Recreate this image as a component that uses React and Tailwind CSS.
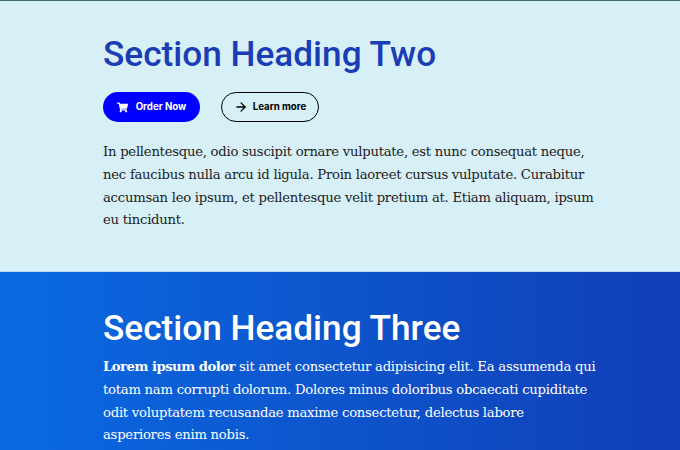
import { ArrowRight } from 'lucide-react';
import { FaShoppingCart } from 'react-icons/fa';

const bodyFont = "font-['DejaVu_Serif',serif] text-[13.2px] leading-[22.75px] tracking-[-0.25px]";

export default function App() {
  return (
    <div className="h-[450px] w-[680px] overflow-hidden">
      <section className="h-[272px] border-t border-b border-t-[#3d6b6e] border-b-[#b9dcf2] bg-[#d7eff6] pt-[32px] pl-[103px]">
        <h2 className="font-['Roboto',sans-serif] text-[35.2px] leading-[42px] font-medium text-[#1a3db5]">
          Section Heading Two
        </h2>
        <div className="mt-[17px] flex gap-[21px]">
          <a className="flex h-[30px] w-[97px] items-center justify-center gap-[8px] rounded-full bg-[#0000ff] font-['Inter',sans-serif] text-[9.7px] font-bold text-white">
            <FaShoppingCart size={11} />
            Order Now
          </a>
          <a className="flex h-[30px] w-[98px] items-center justify-center gap-[5px] rounded-full border border-black font-['Inter',sans-serif] text-[9.7px] font-bold text-black">
            <ArrowRight size={14} strokeWidth={2.2} />
            Learn more
          </a>
        </div>
        <p className={`mt-[19px] w-[496px] text-[#222222] ${bodyFont}`}>
          In pellentesque, odio suscipit ornare vulputate, est nunc consequat neque, nec faucibus nulla arcu id ligula. Proin laoreet cursus vulputate. Curabitur accumsan leo ipsum, et pellentesque velit pretium at. Etiam aliquam, ipsum eu tincidunt.
        </p>
      </section>
      <section className="h-[178px] bg-gradient-to-r from-[#0a6ae2] to-[#103eb6] pt-[35px] pl-[103px] text-white">
        <h2 className="font-['Roboto',sans-serif] text-[35.2px] leading-[42px] font-medium">
          Section Heading Three
        </h2>
        <p className={`mt-[7px] w-[496px] ${bodyFont}`}>
          <strong className="font-bold tracking-[-0.5px]">Lorem ipsum dolor</strong> sit amet consectetur adipisicing elit. Ea assumenda qui totam nam corrupti dolorum. Dolores minus doloribus obcaecati cupiditate odit voluptatem recusandae maxime consectetur, delectus labore<br />asperiores enim nobis.
        </p>
      </section>
    </div>
  );
}
